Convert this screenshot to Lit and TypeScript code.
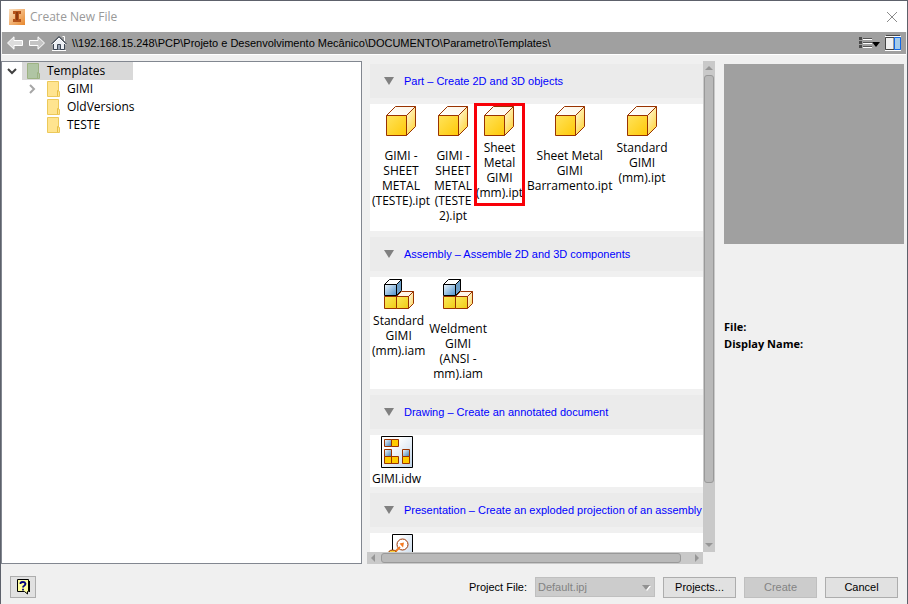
import { LitElement, html, svg, css, nothing } from "lit";
import { customElement, property } from "lit/decorators.js";
import { classMap } from "lit/directives/class-map.js";

type IconName = "part" | "assembly" | "drawing" | "presentation";

interface Template {
  lines: string[];
  low?: boolean;
  marked?: boolean;
}

interface Group {
  title: string;
  icon: IconName;
  items: Template[];
}

const GROUPS: Group[] = [
  {
    title: "Part – Create 2D and 3D objects",
    icon: "part",
    items: [
      { lines: ["GIMI -", "SHEET", "METAL", "(TESTE).ipt"], low: true },
      { lines: ["GIMI -", "SHEET", "METAL", "(TESTE", "2).ipt"], low: true },
      { lines: ["Sheet", "Metal", "GIMI", "(mm).ipt"], marked: true },
      { lines: ["Sheet Metal", "GIMI", "Barramento.ipt"], low: true },
      { lines: ["Standard", "GIMI", "(mm).ipt"] },
    ],
  },
  {
    title: "Assembly – Assemble 2D and 3D components",
    icon: "assembly",
    items: [
      { lines: ["Standard", "GIMI", "(mm).iam"] },
      { lines: ["Weldment", "GIMI", "(ANSI -", "mm).iam"], low: true },
    ],
  },
  {
    title: "Drawing – Create an annotated document",
    icon: "drawing",
    items: [{ lines: ["GIMI.idw"] }],
  },
  {
    title: "Presentation – Create an exploded projection of an assembly",
    icon: "presentation",
    items: [{ lines: [] }],
  },
];

const ICONS = {
  part: svg`
    <defs>
      <linearGradient id="front" x1="0" y1="0" x2="1" y2="1"><stop offset="0" stop-color="#ffe35c"/><stop offset="1" stop-color="#ffc907"/></linearGradient>
      <linearGradient id="top" x1="0" y1="1" x2="1" y2="0"><stop offset="0" stop-color="#fff"/><stop offset="1" stop-color="#fdf4e4"/></linearGradient>
      <linearGradient id="side" x1="0" y1="0" x2="0.6" y2="1"><stop offset="0" stop-color="#fffbe6"/><stop offset="1" stop-color="#ffd640"/></linearGradient>
    </defs>
    <g stroke="#993300" stroke-linejoin="round">
      <path d="M1.5 10.5L10.5 1.5H30.5L21.5 10.5Z" fill="url(#top)"/>
      <path d="M21.5 10.5L30.5 1.5V21.5L21.5 30.5Z" fill="url(#side)"/>
      <path d="M1.5 10.5H21.5V30.5H1.5Z" fill="url(#front)"/>
    </g>`,
  assembly: svg`
    <defs>
      <linearGradient id="blue" x1="0" y1="0" x2="1" y2="1"><stop offset="0" stop-color="#eef6fc"/><stop offset="1" stop-color="#4a90cc"/></linearGradient>
      <linearGradient id="gold" x1="0" y1="0" x2="1" y2="1"><stop offset="0" stop-color="#fbea5c"/><stop offset="1" stop-color="#f0cc14"/></linearGradient>
      <linearGradient id="edge" x1="0" y1="0" x2="1" y2="1"><stop offset="0" stop-color="#fff"/><stop offset="1" stop-color="#fbd24a"/></linearGradient>
    </defs>
    <g stroke="#993300" stroke-linejoin="round">
      <path d="M13.5 18.5L18.5 13.5H30.5L25.5 18.5Z" fill="#fff6e8"/>
      <path d="M25.5 18.5L30.5 13.5V25.5L25.5 30.5Z" fill="url(#edge)"/>
      <path d="M1.5 18.5H13.5V30.5H1.5Z" fill="url(#gold)"/>
      <path d="M13.5 18.5H25.5V30.5H13.5Z" fill="url(#gold)"/>
    </g>
    <g stroke="#000" stroke-linejoin="round">
      <path d="M1.5 6.5L6.5 1.5H18.5L13.5 6.5Z" fill="#fff"/>
      <path d="M13.5 6.5L18.5 1.5V12.5L13.5 17.5Z" fill="#6d9fc8"/>
      <path d="M1.5 6.5H13.5V17.5H1.5Z" fill="url(#blue)"/>
    </g>
    <path d="M1.5 18.5H25.5" stroke="#993300"/>`,
  drawing: svg`
    <defs>
      <linearGradient id="sheet" x1="0" y1="0" x2="1" y2="1"><stop offset="0.3" stop-color="#fff"/><stop offset="1" stop-color="#bcd2e8"/></linearGradient>
      <linearGradient id="steel" x1="0" y1="0" x2="1" y2="1"><stop offset="0.1" stop-color="#e6f1fa"/><stop offset="1" stop-color="#3f7fb6"/></linearGradient>
    </defs>
    <path d="M0.5 0.5H31.5V31.5H0.5Z" fill="url(#sheet)" stroke="#000"/>
    <g stroke="#993300">
      <path d="M3.5 3.5H10.5V10.5H3.5Z" fill="url(#steel)"/>
      <path d="M3.5 13.5H10.5V20.5H3.5Z" fill="url(#steel)"/>
      <path d="M21.5 13.5H28.5V20.5H21.5Z" fill="url(#steel)"/>
      <path d="M10.5 3.5H17.5V10.5H10.5ZM3.5 20.5H10.5V27.5H3.5ZM10.5 20.5H17.5V27.5H10.5ZM21.5 20.5H28.5V27.5H21.5Z" fill="#fc0"/>
    </g>`,
  presentation: svg`
    <defs>
      <linearGradient id="paper" x1="0" y1="0" x2="1" y2="1"><stop offset="0.2" stop-color="#fff"/><stop offset="1" stop-color="#bcd2e8"/></linearGradient>
    </defs>
    <path d="M6.5 0.5H26.5V31.5H6.5Z" fill="url(#paper)" stroke="#000"/>
    <circle cx="16.5" cy="10.5" r="5.5" fill="#fff" stroke="#993300"/>
    <path d="M9 18L14 13" stroke="#f47a20" stroke-width="2"/>
    <path d="M13.5 9.5L18 8.5L17 13.5Z" fill="#f47a20"/>
    <circle cx="6.5" cy="21" r="5" fill="#fcd23c" stroke="#993300"/>`,
};

@customElement("template-tile")
class TemplateTile extends LitElement {
  @property() icon: IconName = "part";
  @property({ attribute: false }) lines: string[] = [];
  @property({ type: Boolean }) low = false;
  @property({ type: Boolean }) marked = false;

  static styles = css`
    :host {
      display: block;
    }
    .tile {
      display: flex;
      flex-direction: column;
      align-items: center;
      gap: 3px;
      min-width: 46px;
      margin: 0;
      padding: 0;
      border: 0;
      background: none;
      color: #000;
      font: 12px/15px "Open Sans", "Noto Sans", sans-serif;
      text-align: center;
    }
    .narrow {
      min-width: 32px;
    }
    .wide {
      min-width: 60px;
    }
    .icon {
      display: block;
      width: 32px;
      height: 32px;
    }
    .label {
      display: block;
      white-space: pre;
    }
    .low {
      padding: 8px 0 7px;
    }
    .marked {
      padding-bottom: 4px;
      outline: 3px solid #f80008;
      outline-offset: -1px;
    }
  `;

  render() {
    return html`<button
      class=${classMap({
        tile: true,
        marked: this.marked,
        narrow: this.low,
        wide: this.lines.length === 0,
      })}
      aria-label=${this.lines.join(" ") || this.icon}
    >
      <svg class="icon" viewBox="0 0 32 32" fill="none">${ICONS[this.icon]}</svg>
      ${this.lines.length
        ? html`<span class=${classMap({ label: true, low: this.low })}
            >${this.lines.join("\n")}</span
          >`
        : nothing}
    </button>`;
  }
}

@customElement("template-group")
class TemplateGroup extends LitElement {
  @property({ attribute: false }) group: Group = GROUPS[0];

  static styles = css`
    :host {
      display: flex;
      flex-direction: column;
      gap: 6px;
      flex: none;
    }
    .title {
      margin: 0;
      background: #ebebeb;
    }
    .toggle {
      display: flex;
      align-items: center;
      gap: 10px;
      width: 100%;
      height: 34px;
      padding: 0 0 0 14px;
      border: 0;
      background: none;
      color: #00f;
      font: 11px/16px "Liberation Sans", Arial, sans-serif;
      white-space: nowrap;
    }
    .arrow {
      flex: none;
      width: 10px;
      height: 8px;
    }
    .items {
      display: flex;
      align-items: flex-start;
      gap: 4px;
      padding: 1px 2px;
      background: #fff;
    }
  `;

  render() {
    return html`
      <h2 class="title">
        <button class="toggle" aria-expanded="true">
          <svg class="arrow" viewBox="0 0 10 8"><path d="M0 0H10L5 8Z" fill="#808080" /></svg>
          <span>${this.group.title}</span>
        </button>
      </h2>
      <div class="items">
        ${this.group.items.map(
          (t) => html`<template-tile
            .icon=${this.group.icon}
            .lines=${t.lines}
            .low=${!!t.low}
            .marked=${!!t.marked}
          ></template-tile>`
        )}
      </div>
    `;
  }
}

const TREE = [
  { name: "Templates", level: 0, open: true },
  { name: "GIMI", level: 1, open: false },
  { name: "OldVersions", level: 1 },
  { name: "TESTE", level: 1 },
];

const folder = (green: boolean) => html`<svg class="folder" viewBox="0 0 13 16">
  <path
    d="M.5 .5H11.500V10.500H12.500V15.500H.5Z"
    fill=${green ? "#b0c5a4" : "#ffe48f"}
    stroke=${green ? "#9db283" : "#ecc95a"}
  />
  <path d="M10.500 15V9.500H11.500" fill="none" stroke=${green ? "#9db283" : "#e8bf45"} />
</svg>`;

@customElement("app-root")
class AppRoot extends LitElement {
  static styles = css`
    :host {
      display: flex;
      flex-direction: column;
      box-sizing: border-box;
      height: 100vh;
      border: 1px solid #5d616b;
      border-bottom: 0;
      background: #f0f0f0;
      color: #000;
      font: 11px/16px "Liberation Sans", Arial, sans-serif;
    }
    svg {
      display: block;
      flex: none;
    }
    button {
      font: inherit;
      color: inherit;
    }
    .bare {
      padding: 0;
      border: 0;
      background: none;
    }
    .titlebar {
      display: flex;
      align-items: center;
      gap: 5px;
      height: 31px;
      padding: 0 9px 0 8px;
      background: #fff;
    }
    .caption {
      flex: 1;
      margin: 0;
      color: #999;
      font: 12px/16px "Open Sans", "Noto Sans", sans-serif;
    }
    .toolbar {
      display: flex;
      align-items: center;
      height: 22px;
      margin: 0 1px;
      padding: 0 5px;
      background: #a0a0a0;
      border-bottom: 1px solid #fff;
    }
    .nav {
      display: flex;
      align-items: center;
      gap: 6px;
    }
    .path {
      flex: 1;
      padding-left: 5px;
      white-space: nowrap;
    }
    .views {
      display: flex;
      align-items: center;
      gap: 4px;
    }
    .main {
      display: flex;
      flex: 1;
      min-height: 0;
      padding-top: 6px;
    }
    .tree {
      box-sizing: border-box;
      flex: 1;
      margin: 0;
      padding: 0;
      border: 1px solid #828790;
      background: #fff;
      list-style: none;
      font: 12px/18px "Open Sans", "Noto Sans", sans-serif;
    }
    .row {
      display: flex;
      align-items: center;
      height: 18px;
    }
    .child {
      padding-left: 20px;
    }
    .twist {
      display: flex;
      justify-content: center;
      width: 20px;
    }
    .node {
      display: flex;
      align-items: center;
      gap: 7px;
      height: 18px;
      padding: 0 5px;
      line-height: 20px;
    }
    .selected {
      width: 101px;
      background: #d9d9d9;
    }
    .folder {
      width: 13px;
      height: 16px;
    }
    .browser {
      display: grid;
      grid-template-columns: 1fr 12px;
      grid-template-rows: 1fr 12px;
      flex: none;
      width: 348px;
      margin-left: 5px;
    }
    .groups {
      display: flex;
      flex-direction: column;
      gap: 6px;
      min-width: 0;
      min-height: 0;
      padding: 3px 0 0 3px;
      overflow: hidden;
    }
    .bar {
      display: flex;
      align-items: center;
      background: #c9c9c9;
    }
    .vertical {
      flex-direction: column;
    }
    .step {
      width: 12px;
      height: 14px;
      display: flex;
      align-items: center;
      justify-content: center;
      flex: none;
    }
    .thumb {
      box-sizing: border-box;
      border: 1px solid #999;
      border-radius: 3px;
      background: #b9b9b9;
    }
    .tall {
      width: 10px;
      flex: 409;
    }
    .long {
      height: 10px;
      margin-left: 2px;
      flex: 300;
    }
    .rest {
      flex: 55;
    }
    .rest-x {
      flex: 10;
    }
    .details {
      flex: none;
      width: 180px;
      margin: 3px 3px 0 9px;
    }
    .preview {
      height: 180px;
      margin-bottom: 74px;
      background: #a0a0a0;
    }
    .meta {
      margin: 0;
      font: 700 11px/17px "Open Sans", "Noto Sans", sans-serif;
    }
    .footer {
      display: flex;
      align-items: center;
      height: 40px;
      padding: 0 9px;
    }
    .help {
      display: flex;
      align-items: center;
      justify-content: center;
      box-sizing: border-box;
      width: 26px;
      height: 22px;
      padding: 0;
      margin-top: 6px;
      border: 1px solid #adadad;
      background: #e1e1e1;
    }
    .form {
      display: flex;
      align-items: center;
      gap: 8px;
      margin: 6px 0 0 auto;
    }
    .picker {
      position: relative;
      display: flex;
    }
    .select {
      appearance: none;
      box-sizing: border-box;
      width: 120px;
      height: 20px;
      padding: 0 2px;
      border: 1px solid #bfbfbf;
      border-radius: 0;
      background: #ccc;
      color: #838383;
      font: inherit;
      opacity: 1;
    }
    .caret {
      position: absolute;
      top: 8px;
      right: 4px;
    }
    .button {
      box-sizing: border-box;
      width: 73px;
      height: 21px;
      padding: 0;
      border: 1px solid #adadad;
      background: #e1e1e1;
    }
    .button:disabled {
      border-color: #bfbfbf;
      background: #ccc;
      color: #838383;
    }
  `;

  private triangle(d: string) {
    return html`<svg width="10" height="10" viewBox="0 0 10 10">
      <path d=${d} fill="#969696" />
    </svg>`;
  }

  private renderTitle() {
    return html`<header class="titlebar">
      <svg width="16" height="16" viewBox="0 0 16 16">
        <defs>
          <linearGradient id="logo" x1="0" y1="0" x2="1" y2="1">
            <stop offset="0" stop-color="#fbe0c0" />
            <stop offset="1" stop-color="#e8872c" />
          </linearGradient>
        </defs>
        <path d="M0 0H16V16H0Z" fill="url(#logo)" />
        <path d="M4 2H12V5H10V10H12V13H4V10H6V5H4Z" fill="#b4531a" />
        <path d="M7 3H9V11H7Z" fill="#8c3a10" />
      </svg>
      <h1 class="caption">Create New File</h1>
      <button class="bare" aria-label="Close">
        <svg width="12" height="12" viewBox="0 0 12 12">
          <path d="M1 1L11 11M11 1L1 11" stroke="#8a8a8a" />
        </svg>
      </button>
    </header>`;
  }

  private renderToolbar() {
    return html`<nav class="toolbar">
      <div class="nav">
        <button class="bare" aria-label="Back">
          <svg width="16" height="14" viewBox="0 0 16 14">
            <path d="M.5 7L7 .8V4.500H15.500V9.500H7V13.200Z" fill="#dcdcdc" stroke="#fff" />
          </svg>
        </button>
        <button class="bare" aria-label="Forward">
          <svg width="16" height="14" viewBox="0 0 16 14">
            <path d="M15.500 7L9 .8V4.500H.5V9.500H9V13.200Z" fill="#c4c4c4" stroke="#fff" />
          </svg>
        </button>
        <button class="bare" aria-label="Home">
          <svg width="16" height="16" viewBox="0 0 16 16">
            <path d="M2.500 8V14.500H13.500V8L8 2.500Z" fill="#eceff4" stroke="#3c4654" />
            <path d="M11.500 1.500H13.500V6" fill="none" stroke="#fff" />
            <path d="M.5 9L8 1.500L15.500 9" fill="none" stroke="#2e3846" />
            <path d="M1.500 9.500L8 3L14.500 9.500" fill="none" stroke="#fff" />
            <path d="M6.500 14.500V9.500H9.500V14.500" fill="#9aa4b4" stroke="#3c4654" />
            <path d="M1 15.500H15" stroke="#fff" />
          </svg>
        </button>
      </div>
      <span class="path"
        >\\\\192.168.15.248\\PCP\\Projeto e Desenvolvimento
        Mecânico\\DOCUMENTO\\Parametro\\Templates\\</span
      >
      <div class="views">
        <button class="bare" aria-label="View mode">
          <svg width="22" height="14" viewBox="0 0 22 14">
            <path d="M0 1H3V4H0ZM0 5H3V8H0ZM0 9H3V12H0Z" fill="#4a4a4a" />
            <path d="M4 3.500H13M4 7.500H13M4 11.500H13" stroke="#fff" />
            <path d="M4 2.500H13M4 6.500H13M4 10.500H13" stroke="#555" />
            <path d="M13 6H21L17 11Z" fill="#000" />
          </svg>
        </button>
        <button class="bare" aria-label="Preview pane">
          <svg width="16" height="16" viewBox="0 0 16 16">
            <path d="M1 .5H15" stroke="#4a4a4a" />
            <path d="M0 1.500H16M0 15.500H16" stroke="#fff" />
            <path d="M.5 2.500H9V14.500H.5Z" fill="#f1f1f1" stroke="#444" />
            <path d="M9.500 2.500H15.500V14.500H9.500Z" fill="#a4cbea" stroke="#1068e8" />
          </svg>
        </button>
      </div>
    </nav>`;
  }

  private renderTree() {
    return html`<ul class="tree" role="tree">
      ${TREE.map(
        (n) => html`<li
          class=${classMap({ row: true, child: n.level === 1 })}
          role="treeitem"
        >
          <span class="twist">
            ${n.open === undefined
              ? nothing
              : html`<svg width="10" height="10" viewBox="0 0 10 10" fill="none">
                  ${n.open
                    ? svg`<path d="M1 3L5 7L9 3" stroke="#404040" stroke-width="2"/>`
                    : svg`<path d="M3 1L7 5L3 9" stroke="#a6a6a6" stroke-width="2"/>`}
                </svg>`}
          </span>
          <span class=${classMap({ node: true, selected: n.level === 0 })}>
            ${folder(n.level === 0)}${n.name}
          </span>
        </li>`
      )}
    </ul>`;
  }

  private renderBrowser() {
    return html`<section class="browser">
      <div class="groups">
        ${GROUPS.map((g) => html`<template-group .group=${g}></template-group>`)}
      </div>
      <div class="bar vertical">
        <span class="step">${this.triangle("M1 7L5 3L9 7Z")}</span>
        <span class="thumb tall"></span>
        <span class="rest"></span>
        <span class="step">${this.triangle("M1 3L5 7L9 3Z")}</span>
      </div>
      <div class="bar">
        <span class="step">${this.triangle("M7 1L3 5L7 9Z")}</span>
        <span class="thumb long"></span>
        <span class="rest-x"></span>
        <span class="step">${this.triangle("M3 1L7 5L3 9Z")}</span>
      </div>
    </section>`;
  }

  private renderFooter() {
    return html`<footer class="footer">
      <button class="help" aria-label="Help">
        <svg width="14" height="16" viewBox="0 0 14 16">
          <path d="M1.500 .5H12.500V12.500H11.500V15L8.500 12.500H1.500Z" fill="#ffffa0" stroke="#000" />
          <path d="M13.500 2V13" stroke="#000" />
          <path
            d="M4.500 5V4Q5 3 7 3T9.500 4.800Q9.500 6 8.200 6.700Q7 7.300 7 8.500M7 9.800V11.500"
            fill="none"
            stroke="#00007c"
            stroke-width="1.800"
          />
        </svg>
      </button>
      <div class="form">
        <label for="project">Project File:</label>
        <span class="picker">
          <select class="select" id="project" disabled>
            <option>Default.ipj</option>
          </select>
          <svg class="caret" width="9" height="6" viewBox="0 0 9 6">
            <path d="M1 1H9L5 6Z" fill="#fff" />
            <path d="M0 0H8L4 5Z" fill="#919191" />
          </svg>
        </span>
        <button class="button">Projects...</button>
        <button class="button" disabled>Create</button>
        <button class="button">Cancel</button>
      </div>
    </footer>`;
  }

  render() {
    return html`
      ${this.renderTitle()} ${this.renderToolbar()}
      <main class="main">
        ${this.renderTree()} ${this.renderBrowser()}
        <aside class="details">
          <div class="preview"></div>
          <p class="meta">File:</p>
          <p class="meta">Display Name:</p>
        </aside>
      </main>
      ${this.renderFooter()}
    `;
  }
}
